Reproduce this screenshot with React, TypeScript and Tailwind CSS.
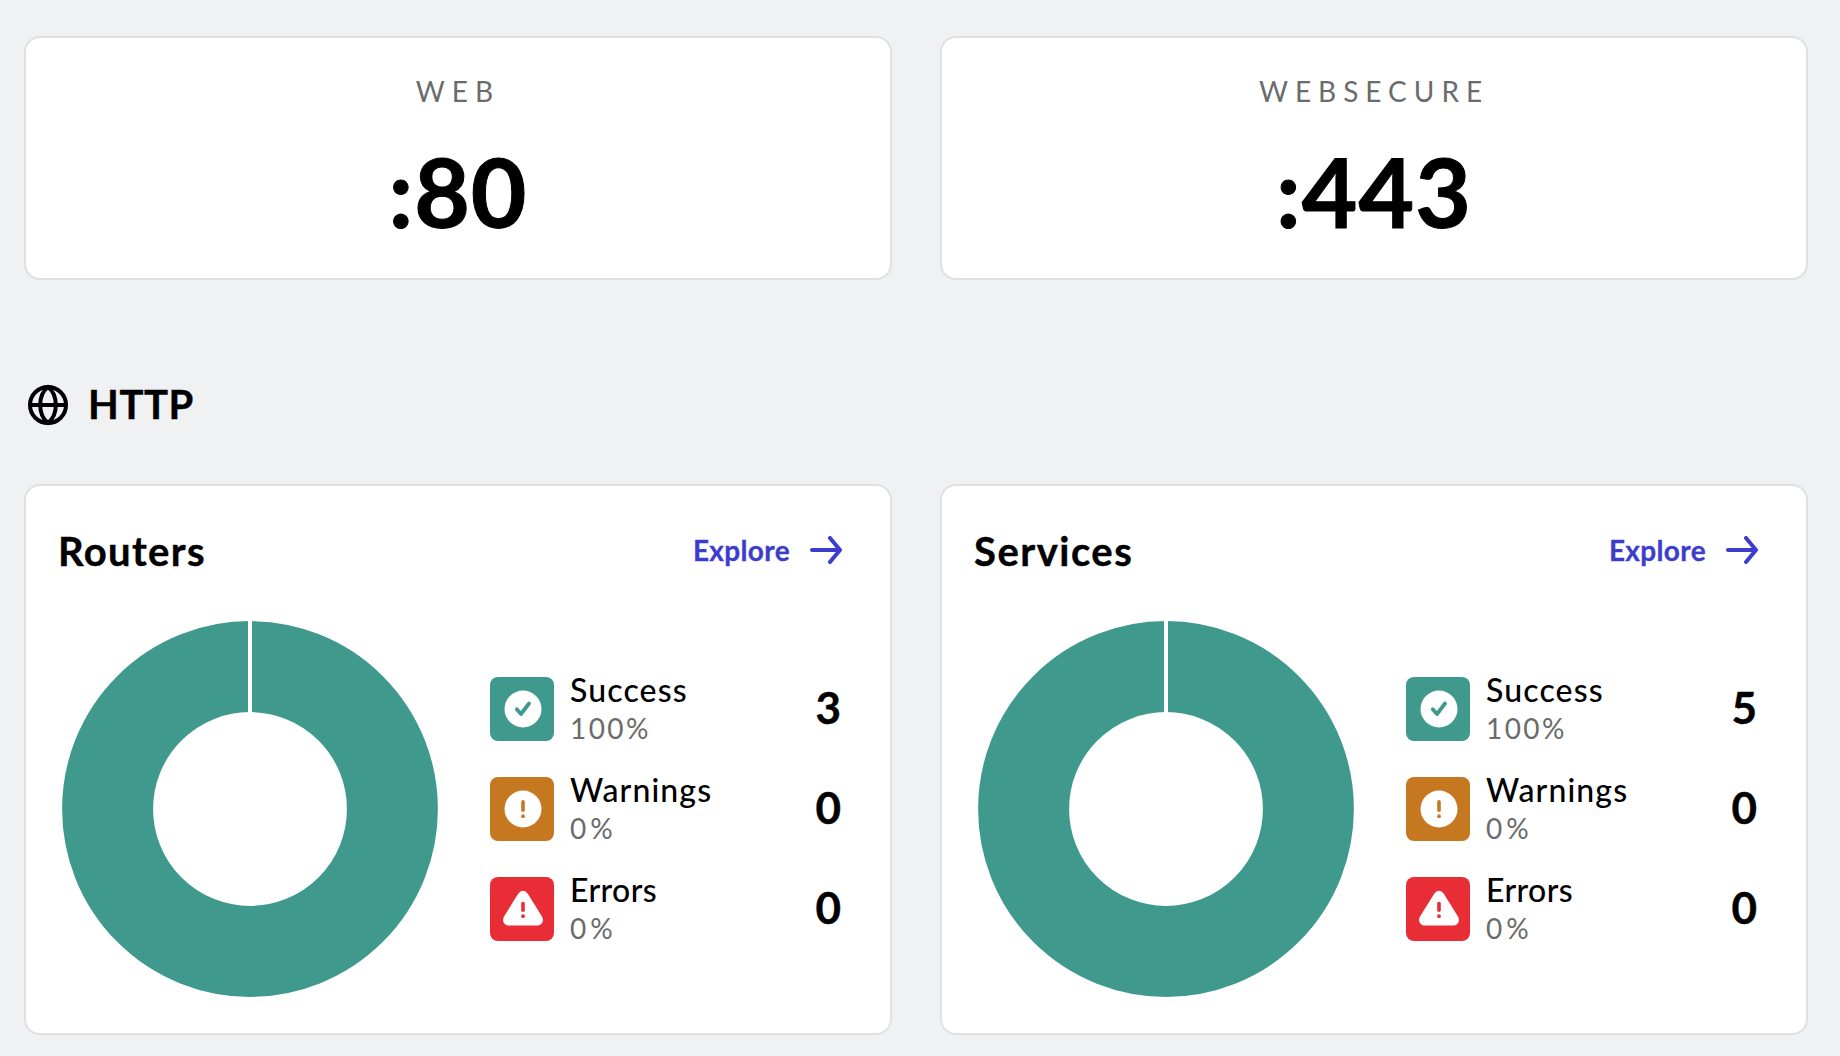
import type { ReactNode } from "react";

type Kind = "success" | "warning" | "error";

function GlobeIcon() {
  return (
    <svg width="48" height="48" viewBox="0 0 24 24" fill="none" stroke="currentColor" strokeWidth="2">
      <circle cx="12" cy="12" r="9" />
      <path d="M12 3C14.8 5.2 15.9 8.4 15.9 12S14.8 18.8 12 21C9.2 18.8 8.1 15.6 8.1 12S9.2 5.2 12 3Z" />
      <path d="M3 12h18" />
    </svg>
  );
}

function ArrowIcon() {
  return (
    <svg
      width="32"
      height="28"
      viewBox="0 0 32 28"
      fill="none"
      stroke="currentColor"
      strokeWidth="4"
      strokeLinecap="round"
      strokeLinejoin="round"
    >
      <path d="M2 14h28M20 2l10 12-10 12" />
    </svg>
  );
}

function StatusIcon({ kind }: { kind: Kind }) {
  if (kind === "success") {
    return (
      <svg className="block" width="64" height="64" viewBox="0 0 64 64">
        <rect width="64" height="64" rx="8" fill="#3f9a8d" />
        <circle cx="33" cy="32" r="18.5" fill="#fff" />
        <path
          d="M26.8 32.2 31 37l8-10.5"
          fill="none"
          stroke="#3f9a8d"
          strokeWidth="3.8"
          strokeLinecap="round"
          strokeLinejoin="round"
        />
      </svg>
    );
  }
  if (kind === "warning") {
    return (
      <svg className="block" width="64" height="64" viewBox="0 0 64 64">
        <rect width="64" height="64" rx="8" fill="#c57820" />
        <circle cx="33" cy="32" r="18.5" fill="#fff" />
        <path d="M33 24.9v8.4" stroke="#c57820" strokeWidth="3.6" strokeLinecap="round" />
        <circle cx="33" cy="39.2" r="1.9" fill="#c57820" />
      </svg>
    );
  }
  return (
    <svg className="block" width="64" height="64" viewBox="0 0 64 64">
      <rect width="64" height="64" rx="8" fill="#e92d36" />
      <path
        d="M28.2 16.8Q30.3 13.7 33 13.7T37.8 16.8L51.8 39.2C54.7 44.2 51.6 48.6 46.6 48.6H19.4C14.4 48.6 11.3 44.2 14.2 39.2Z"
        fill="#fff"
      />
      <path d="M33 26.5v6.8" stroke="#e92d36" strokeWidth="3.6" strokeLinecap="round" />
      <circle cx="33" cy="39.2" r="1.9" fill="#e92d36" />
    </svg>
  );
}

function Donut() {
  return (
    <svg className="block shrink-0" width="376" height="376" viewBox="0 0 376 376">
      <circle cx="188" cy="188" r="142.4" fill="none" stroke="#3f9a8d" strokeWidth="91" />
      <path d="M188 0v100" stroke="#fff" strokeWidth="4" />
    </svg>
  );
}

function Card({ className, children }: { className: string; children: ReactNode }) {
  return (
    <div className={`rounded-2xl border-2 border-[#e0e0e1] bg-white ${className}`}>{children}</div>
  );
}

function EntryPoint({ name, port }: { name: string; port: string }) {
  return (
    <Card className="flex h-[244px] flex-col items-center pt-8">
      <div className="text-[28px] leading-[42px] tracking-[7px] text-[#6b6b6b]">{name}</div>
      <div className="mt-[19px] text-[96px] leading-[120px] font-bold tracking-[1px] [-webkit-text-stroke:1px_black]">
        {port}
      </div>
    </Card>
  );
}

function Legend({ kind, label, labelClass, percent, percentClass, count }: {
  kind: Kind;
  label: string;
  labelClass: string;
  percent: string;
  percentClass: string;
  count: number;
}) {
  return (
    <div className="flex h-16 items-center">
      <StatusIcon kind={kind} />
      <div className="ml-4 flex flex-col">
        <span className={`text-[32px] leading-[38px] font-medium ${labelClass}`}>{label}</span>
        <span className={`text-[28px] leading-[38px] text-[#6b6b6b] ${percentClass}`}>{percent}</span>
      </div>
      <span className="mb-1 ml-auto text-[44px] leading-[56px] font-bold [-webkit-text-stroke:0.4px_black]">
        {count}
      </span>
    </div>
  );
}

function Resource({ title, titleClass, total }: { title: string; titleClass: string; total: number }) {
  return (
    <Card className="h-[551px] pt-9 pr-12 pl-8">
      <div className="flex h-14 items-center justify-between">
        <h3 className={`mt-0.5 text-[40px] leading-[56px] font-bold [-webkit-text-stroke:0.4px_black] ${titleClass}`}>
          {title}
        </h3>
        <a className="flex items-center gap-5 text-[#3d3dcc]">
          <span className="text-[28px] leading-[40px] font-bold tracking-[0.35px] [-webkit-text-stroke:0.3px_#3d3dcc]">
            Explore
          </span>
          <ArrowIcon />
        </a>
      </div>
      <div className="mt-[43px] ml-1 flex items-center">
        <Donut />
        <div className="mr-px ml-[52px] flex flex-1 flex-col gap-9">
          <Legend kind="success" label="Success" labelClass="tracking-[1.15px]" percent="100%" percentClass="tracking-[2.4px]" count={total} />
          <Legend kind="warning" label="Warnings" labelClass="tracking-[1.1px]" percent="0%" percentClass="tracking-[4px]" count={0} />
          <Legend kind="error" label="Errors" labelClass="tracking-[0.4px]" percent="0%" percentClass="tracking-[4px]" count={0} />
        </div>
      </div>
    </Card>
  );
}

export default function App() {
  return (
    <main className="h-[1056px] overflow-hidden bg-[#eff1f3] pt-9 pr-8 pl-6 font-['Lato','Noto_Sans',sans-serif] text-black">
      <section className="grid grid-cols-2 gap-12">
        <EntryPoint name="WEB" port=":80" />
        <EntryPoint name="WEBSECURE" port=":443" />
      </section>
      <div className="mt-[97px] flex h-14 items-center gap-4">
        <GlobeIcon />
        <h2 className="mb-0.5 text-[40px] leading-[56px] font-bold tracking-[0.6px] [-webkit-text-stroke:0.4px_black]">
          HTTP
        </h2>
      </div>
      <section className="mt-[51px] grid grid-cols-2 gap-12">
        <Resource title="Routers" titleClass="tracking-[1.35px]" total={3} />
        <Resource title="Services" titleClass="tracking-[1.5px]" total={5} />
      </section>
    </main>
  );
}
